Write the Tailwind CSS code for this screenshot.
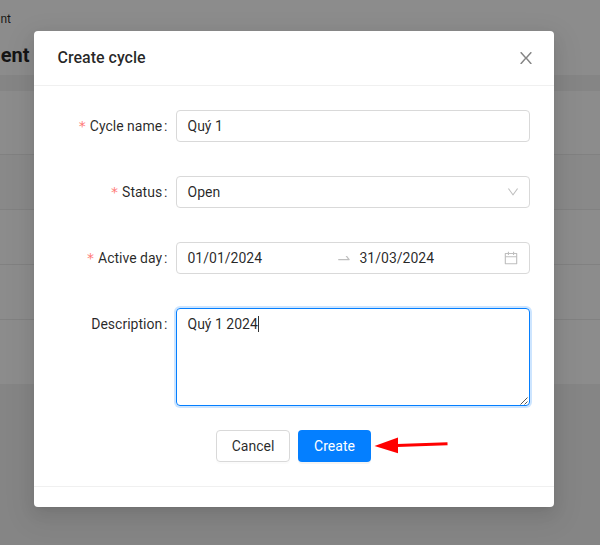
<!DOCTYPE html>
<html lang="en">
<head>
<meta charset="utf-8">
<title>Create cycle</title>
<script src="https://cdn.jsdelivr.net/npm/@tailwindcss/browser@4"></script>
</head>
<body class="relative h-[545px] w-[600px] overflow-hidden bg-[#f2f2f2] font-[Roboto,sans-serif] text-sm leading-[22px] text-black/85">
<!-- Page behind the dialog -->
<div class="flex h-[75px] flex-col bg-white">
  <div class="flex h-[38px] items-end"><span class="h-[30px] w-[11px] text-right text-xs leading-[22px]">nt</span></div>
  <div class="flex h-[34px] items-center"><span class="flex w-[29.500px] justify-end text-xl font-bold leading-8">ent</span></div>
</div>
<div class="mt-4 flex h-[293px] flex-col bg-white">
  <div class="h-16 border-b border-[#ececec]"></div>
  <div class="h-[55px] border-b border-[#ececec] bg-[#fafafa]"></div>
  <div class="h-[55px] border-b border-[#ececec]"></div>
  <div class="h-[55px] border-b border-[#ececec]"></div>
</div>
<div class="absolute inset-0 bg-black/45"></div>

<!-- Dialog -->
<section class="absolute left-[34px] top-[31px] flex h-[476px] w-[520px] flex-col rounded bg-white shadow-[0_3px_6px_-4px_rgba(0,0,0,0.12),0_6px_16px_0_rgba(0,0,0,0.08),0_9px_28px_8px_rgba(0,0,0,0.05)]">
  <header class="flex h-[55px] shrink-0 items-center justify-between border-b border-[#f0f0f0] pl-[23.5px] pr-[22px]">
    <h1 class="text-base font-medium leading-[22px]">Create cycle</h1>
    <svg class="h-3 w-3" viewBox="0 0 12 12" fill="none" stroke="#858585" stroke-width="1.5"><path d="M.7 .2 6 6.2 11.3 .2M.7 12 6 5.8 11.3 12"/></svg>
  </header>
  <form class="flex flex-col gap-[34px] px-6 pt-6">
    <div class="flex">
      <label class="flex h-8 w-[118px] items-center justify-end pr-[8.5px]"><span class="mr-1 font-['DejaVu_Sans',sans-serif] text-[#ff7875]">*</span>Cycle name<span class="ml-0.5">:</span></label>
      <div class="flex h-8 flex-1 items-center rounded border border-[#d9d9d9] px-[10.5px]">Quý 1</div>
    </div>
    <div class="flex">
      <label class="flex h-8 w-[118px] items-center justify-end pr-[8.5px]"><span class="mr-1 font-['DejaVu_Sans',sans-serif] text-[#ff7875]">*</span>Status<span class="ml-0.5">:</span></label>
      <div class="flex h-8 flex-1 items-center justify-between rounded border border-[#d9d9d9] px-[10.5px]">Open
        <svg class="h-3 w-3" viewBox="64 64 896 896" fill="#bfbfbf"><path d="M884 256h-75c-5.100 0-9.900 2.500-12.900 6.600L512 654.200 227.900 262.600c-3-4.100-7.800-6.600-12.900-6.600h-75c-6.500 0-10.300 7.400-6.500 12.700l352.600 486.100c12.800 17.600 39 17.600 51.700 0l352.600-486.100c3.900-5.300.1-12.700-6.400-12.700z"/></svg>
      </div>
    </div>
    <div class="flex">
      <label class="flex h-8 w-[118px] items-center justify-end pr-[8.5px]"><span class="mr-1 font-['DejaVu_Sans',sans-serif] text-[#ff7875]">*</span>Active day<span class="ml-0.5">:</span></label>
      <div class="flex h-8 flex-1 items-center rounded border border-[#d9d9d9] pl-[10.5px] pr-[11px]">
        <span class="w-[148px]">01/01/2024</span>
        <svg class="mr-2 h-4 w-4" viewBox="0 0 1024 1024" fill="#bfbfbf"><path d="M873.100 596.200l-164-208A32 32 0 00684 376h-64.800c-6.700 0-10.400 7.700-6.300 13l144.300 183H152c-4.400 0-8 3.600-8 8v60c0 4.400 3.600 8 8 8h695.900c26.800 0 41.700-30.800 25.200-51.800z"/></svg>
        <span class="flex-1">31/03/2024</span>
        <svg class="h-[14px] w-[14px]" viewBox="64 64 896 896" fill="#bfbfbf"><path d="M880 184H712v-64c0-4.400-3.600-8-8-8h-56c-4.400 0-8 3.600-8 8v64H384v-64c0-4.400-3.600-8-8-8h-56c-4.400 0-8 3.600-8 8v64H144c-17.700 0-32 14.300-32 32v664c0 17.700 14.300 32 32 32h736c17.700 0 32-14.300 32-32V216c0-17.700-14.300-32-32-32zm-40 656H184V460h656v380zM184 392V256h128v48c0 4.400 3.600 8 8 8h56c4.400 0 8-3.600 8-8v-48h256v48c0 4.400 3.600 8 8 8h56c4.400 0 8-3.600 8-8v-48h128v136H184z"/></svg>
      </div>
    </div>
    <div class="flex">
      <label class="flex h-8 w-[118px] items-center justify-end pr-[8.5px]">Description<span class="ml-0.5">:</span></label>
      <div class="relative flex h-[98px] flex-1 items-start rounded border border-[#047fff] px-[10.5px] py-1 shadow-[0_0_0_2px_rgba(4,127,255,0.2)]"><span>Quý 1 2024</span><span class="mt-[3px] h-4 w-px bg-black/80"></span>
        <svg class="absolute bottom-0 right-0 h-[9px] w-[9px]" viewBox="0 0 9 9" fill="none" stroke="#555" stroke-width="1"><path d="M.5 8.500 7.500 1.500M4.500 8.500 7.500 5.500"/></svg>
      </div>
    </div>
  </form>
  <div class="mt-6 flex h-8 gap-2 pl-[182px]">
    <button class="w-[74px] rounded border border-[#d9d9d9] shadow-[0_2px_0_rgba(0,0,0,0.016)]">Cancel</button>
    <button class="w-[73px] rounded bg-[#047fff] text-white shadow-[0_2px_0_rgba(0,0,0,0.045)]">Create</button>
  </div>
  <footer class="mt-6 border-t border-[#f0f0f0]"></footer>
</section>

<!-- Pointer to the submit button -->
<svg class="absolute left-[374px] top-[434px] h-6 w-[76px]" viewBox="0 0 76 24"><path d="M23 11.500 73.500 9.800" stroke="#f00" stroke-width="3"/><path d="M.5 12 24 3.500V19.200Z" fill="#f00"/></svg>
</body>
</html>
